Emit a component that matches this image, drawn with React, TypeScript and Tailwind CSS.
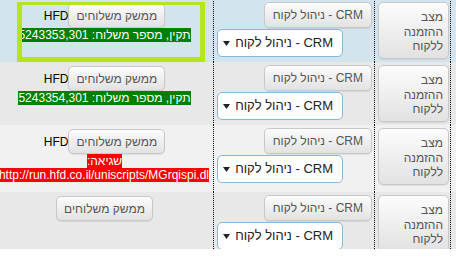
const btn =
  'rounded-[5px] border border-[#c8c8c8] bg-linear-to-b from-[#fcfcfc] to-[#e2e2e2] text-[#555] shadow-[0_1px_1px_rgba(0,0,0,0.08)]'

type Line = { text: string; cls: string; nowrapRight?: boolean }

type RowData = {
  bg: string
  h: string
  hfd: boolean
  lines: Line[]
}

const rows: RowData[] = [
  {
    bg: 'bg-[#d3e4ee]',
    h: 'h-[63px]',
    hfd: true,
    lines: [{ text: 'תקין, מספר משלוח: 5243353,301', cls: 'bg-[#008000] text-white' }],
  },
  {
    bg: 'bg-[#e8e8e8]',
    h: 'h-[63px]',
    hfd: true,
    lines: [{ text: 'תקין, מספר משלוח: 5243354,301', cls: 'bg-[#008000] text-white' }],
  },
  {
    bg: 'bg-[#f1f1f1]',
    h: 'h-[67px]',
    hfd: true,
    lines: [
      { text: 'שגיאה:', cls: 'bg-[#ff0000] text-white' },
      { text: 'http://run.hfd.co.il/uniscripts/MGrqispi.dl', cls: 'bg-[#ff0000] text-white', nowrapRight: true },
    ],
  },
  { bg: 'bg-[#e8e8e8]', h: 'h-[63px]', hfd: false, lines: [] },
]

function Row({ row }: { row: RowData }) {
  return (
    <div className={`flex ${row.bg} ${row.h}`}>
      {/* sliver of next column */}
      <div className="w-[6px] shrink-0 border-l border-dotted border-black" />

      <div className="w-[76px] shrink-0 border-l border-dotted border-black pt-[3px] pr-[1px]">
        <div className={`${btn} block h-[57px] w-[71px] pt-[7px] pr-[5px] text-right text-[12px] leading-[14.5px]`}>
          מצב
          <br />
          ההזמנה
          <br />
          ללקוח
        </div>
      </div>

      <div className="flex w-[161px] shrink-0 flex-col border-l border-dotted border-black pt-[3px]">
        <div className={`${btn} mr-[2px] flex h-[26px] items-center self-start px-[8px] text-[12px]`}>
          CRM - ניהול לקוח
        </div>
        <div className="mt-[1px] ml-[3px] flex h-[28px] w-[126px] items-center justify-between self-end rounded-[5px] border border-[#86b8d8] bg-white pr-[9px] pl-[5px] text-[13px] text-[#222]">
          <span>CRM - ניהול לקוח</span>
          <svg width="7" height="5" viewBox="0 0 7 5">
            <path d="M0 0 L7 0 L3.5 5 Z" fill="#222" />
          </svg>
        </div>
      </div>

      <div className="min-w-0 flex-1 pt-[4px] pr-[4px] text-center text-[12px] leading-[14px]">
        <div className="flex items-center justify-center">
          <div className={`${btn} flex h-[25px] items-center px-[7px]`}>ממשק משלוחים</div>
          {row.hfd && <span className="text-black">HFD</span>}
        </div>
        {row.lines.map((l, i) => (
          <div key={i} className={l.nowrapRight ? 'whitespace-nowrap text-right' : 'whitespace-nowrap'}>
            <span className={l.cls}>{l.text}</span>
          </div>
        ))}
      </div>
    </div>
  )
}

export default function App() {
  return (
    <div className="h-[259px] w-[456px] overflow-hidden bg-white font-['Liberation_Sans',Arial,sans-serif]">
      <div dir="rtl" className="relative -mt-px h-[250px] overflow-hidden">
        {rows.map((r, i) => (
          <Row key={i} row={r} />
        ))}
        {/* highlight frame */}
        <div className="pointer-events-none absolute top-[3px] left-[17px] h-[60px] w-[188px] border-[5px] border-t-[3px] border-[#b5e61d]" />
      </div>
    </div>
  )
}
